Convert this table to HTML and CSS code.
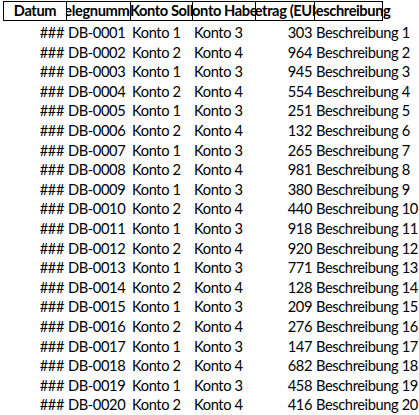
FILE: index.html
```html
<!DOCTYPE html>
<html lang="de">
<head>
<meta charset="utf-8">
<title>Buchungen</title>
<link rel="stylesheet" href="styles.css">
</head>
<body>
<div class="sheet">
  <div class="row head">
    <div class="c c1"><span>Datum</span></div>
    <div class="c c2"><span>Belegnummer</span></div>
    <div class="c c3"><span>Konto Soll</span></div>
    <div class="c c4"><span>Konto Haben</span></div>
    <div class="c c5"><span>Betrag (EUR)</span></div>
    <div class="c c6 last"><span>Beschreibung</span></div>
  </div>
  <div class="rows">
  <div class="row"><div class="c c1 r">###</div><div class="c c2">DB-0001</div><div class="c c3">Konto 1</div><div class="c c4">Konto 3</div><div class="c c5 r">303</div><div class="c c6">Beschreibung 1</div></div>
  <div class="row"><div class="c c1 r">###</div><div class="c c2">DB-0002</div><div class="c c3">Konto 2</div><div class="c c4">Konto 4</div><div class="c c5 r">964</div><div class="c c6">Beschreibung 2</div></div>
  <div class="row"><div class="c c1 r">###</div><div class="c c2">DB-0003</div><div class="c c3">Konto 1</div><div class="c c4">Konto 3</div><div class="c c5 r">945</div><div class="c c6">Beschreibung 3</div></div>
  <div class="row"><div class="c c1 r">###</div><div class="c c2">DB-0004</div><div class="c c3">Konto 2</div><div class="c c4">Konto 4</div><div class="c c5 r">554</div><div class="c c6">Beschreibung 4</div></div>
  <div class="row"><div class="c c1 r">###</div><div class="c c2">DB-0005</div><div class="c c3">Konto 1</div><div class="c c4">Konto 3</div><div class="c c5 r">251</div><div class="c c6">Beschreibung 5</div></div>
  <div class="row"><div class="c c1 r">###</div><div class="c c2">DB-0006</div><div class="c c3">Konto 2</div><div class="c c4">Konto 4</div><div class="c c5 r">132</div><div class="c c6">Beschreibung 6</div></div>
  <div class="row"><div class="c c1 r">###</div><div class="c c2">DB-0007</div><div class="c c3">Konto 1</div><div class="c c4">Konto 3</div><div class="c c5 r">265</div><div class="c c6">Beschreibung 7</div></div>
  <div class="row"><div class="c c1 r">###</div><div class="c c2">DB-0008</div><div class="c c3">Konto 2</div><div class="c c4">Konto 4</div><div class="c c5 r">981</div><div class="c c6">Beschreibung 8</div></div>
  <div class="row"><div class="c c1 r">###</div><div class="c c2">DB-0009</div><div class="c c3">Konto 1</div><div class="c c4">Konto 3</div><div class="c c5 r">380</div><div class="c c6">Beschreibung 9</div></div>
  <div class="row"><div class="c c1 r">###</div><div class="c c2">DB-0010</div><div class="c c3">Konto 2</div><div class="c c4">Konto 4</div><div class="c c5 r">440</div><div class="c c6">Beschreibung 10</div></div>
  <div class="row"><div class="c c1 r">###</div><div class="c c2">DB-0011</div><div class="c c3">Konto 1</div><div class="c c4">Konto 3</div><div class="c c5 r">918</div><div class="c c6">Beschreibung 11</div></div>
  <div class="row"><div class="c c1 r">###</div><div class="c c2">DB-0012</div><div class="c c3">Konto 2</div><div class="c c4">Konto 4</div><div class="c c5 r">920</div><div class="c c6">Beschreibung 12</div></div>
  <div class="row"><div class="c c1 r">###</div><div class="c c2">DB-0013</div><div class="c c3">Konto 1</div><div class="c c4">Konto 3</div><div class="c c5 r">771</div><div class="c c6">Beschreibung 13</div></div>
  <div class="row"><div class="c c1 r">###</div><div class="c c2">DB-0014</div><div class="c c3">Konto 2</div><div class="c c4">Konto 4</div><div class="c c5 r">128</div><div class="c c6">Beschreibung 14</div></div>
  <div class="row"><div class="c c1 r">###</div><div class="c c2">DB-0015</div><div class="c c3">Konto 1</div><div class="c c4">Konto 3</div><div class="c c5 r">209</div><div class="c c6">Beschreibung 15</div></div>
  <div class="row"><div class="c c1 r">###</div><div class="c c2">DB-0016</div><div class="c c3">Konto 2</div><div class="c c4">Konto 4</div><div class="c c5 r">276</div><div class="c c6">Beschreibung 16</div></div>
  <div class="row"><div class="c c1 r">###</div><div class="c c2">DB-0017</div><div class="c c3">Konto 1</div><div class="c c4">Konto 3</div><div class="c c5 r">147</div><div class="c c6">Beschreibung 17</div></div>
  <div class="row"><div class="c c1 r">###</div><div class="c c2">DB-0018</div><div class="c c3">Konto 2</div><div class="c c4">Konto 4</div><div class="c c5 r">682</div><div class="c c6">Beschreibung 18</div></div>
  <div class="row"><div class="c c1 r">###</div><div class="c c2">DB-0019</div><div class="c c3">Konto 1</div><div class="c c4">Konto 3</div><div class="c c5 r">458</div><div class="c c6">Beschreibung 19</div></div>
  <div class="row"><div class="c c1 r">###</div><div class="c c2">DB-0020</div><div class="c c3">Konto 2</div><div class="c c4">Konto 4</div><div class="c c5 r">416</div><div class="c c6">Beschreibung 20</div></div>
  </div>
</div>
</body>
</html>
```
FILE: styles.css
```css
html, body {
  margin: 0;
  background: #fff;
}
body {
  padding: 1px 0 0 3px;
  font-family: Lato, "Open Sans", sans-serif;
  font-size: 14.67px;
  letter-spacing: -0.4px;
  color: #000;
}
.sheet {
  display: flex;
  flex-direction: column;
}
.rows {
  display: flex;
  flex-direction: column;
  padding-top: 2px;
}
.row {
  display: grid;
  grid-template-columns: 63px 64px 62px 63px 59px 69px;
  height: 19.6px;
  align-items: center;
}
.c {
  padding: 0 2px;
  white-space: nowrap;
  overflow: visible;
  line-height: 19.6px;
}
.c.r {
  text-align: right;
}
.head {
  height: 20px;
}
.head .c {
  height: 20px;
  box-sizing: border-box;
  border-top: 1px solid #000;
  border-bottom: 1px solid #000;
  border-left: 1px solid #000;
  font-weight: bold;
  padding: 0;
  display: flex;
  justify-content: center;
  align-items: center;
  overflow: hidden;
  line-height: 18px;
}
.head .c.last {
  border-right: 1px solid #000;
  overflow: visible;
  clip-path: inset(-4px -60px -4px 0);
}
```
